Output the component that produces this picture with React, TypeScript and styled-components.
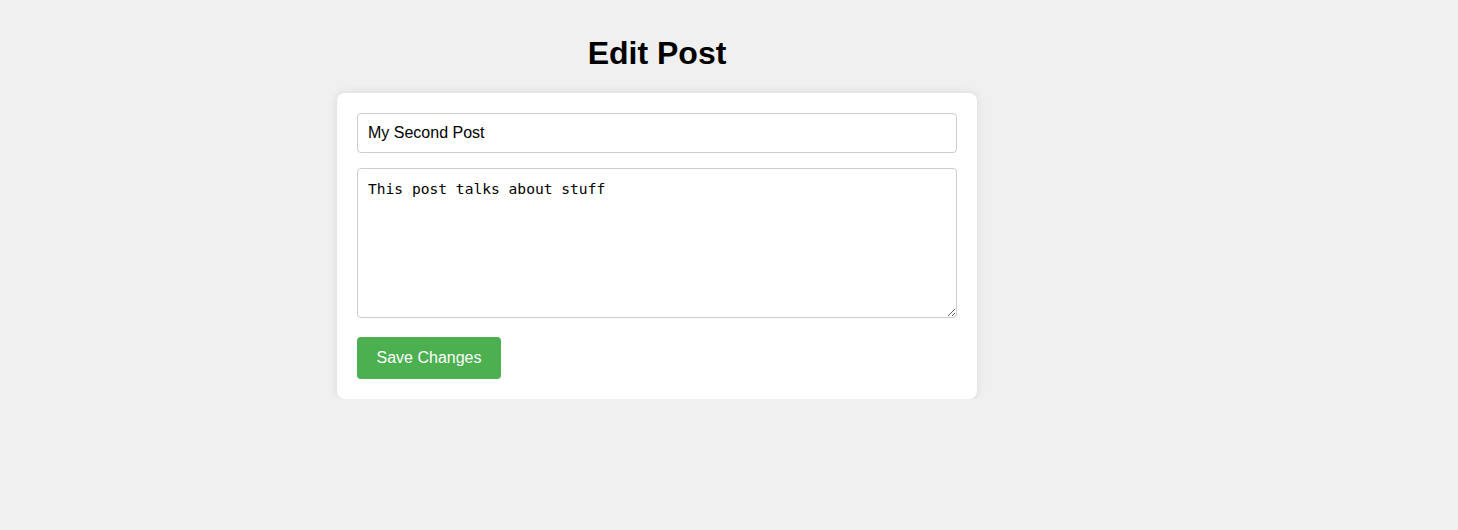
import React, { useState } from "react";
import styled, { createGlobalStyle } from "styled-components";

const GlobalStyle = createGlobalStyle`
  html, body {
    margin: 0;
    padding: 0;
    background: #f0f0f0;
    font-family: "Liberation Sans", Arial, sans-serif;
  }
`;

const Page = styled.div`
  width: 1314px;
  padding-top: 14px;
  display: flex;
  flex-direction: column;
  align-items: center;
`;

const Title = styled.h1`
  margin: 21.44px 0 20.44px;
  font-size: 32px;
  font-weight: bold;
  color: #000;
  text-align: center;
`;

const Card = styled.form`
  width: 600px;
  padding: 20px;
  background: #fff;
  border-radius: 8px;
  box-shadow: 0 0 10px rgba(0, 0, 0, 0.1);
  display: flex;
  flex-direction: column;
  align-items: flex-start;
`;

const TextInput = styled.input`
  box-sizing: border-box;
  width: 100%;
  height: 40px;
  padding: 10px;
  border: 1px solid #ccc;
  border-radius: 4px;
  font-family: "Liberation Sans", Arial, sans-serif;
  font-size: 16px;
  color: #000;
  margin: 0 0 15px;
  outline: none;
`;

const TextArea = styled.textarea`
  box-sizing: border-box;
  width: 100%;
  height: 150px;
  padding: 10px;
  border: 1px solid #ccc;
  border-radius: 4px;
  font-family: "DejaVu Sans Mono", monospace;
  font-size: 14.6px;
  line-height: 19px;
  color: #000;
  margin: 0 0 19px;
  outline: none;
  display: block;
`;

const SaveButton = styled.button`
  width: 144px;
  height: 42px;
  padding: 0;
  border: none;
  border-radius: 4px;
  background: #4caf50;
  color: #fff;
  font-family: "Liberation Sans", Arial, sans-serif;
  font-size: 16px;
  cursor: pointer;
`;

export default function App() {
  const [title, setTitle] = useState("My Second Post");
  const [body, setBody] = useState("This post talks about stuff");
  return (
    <>
      <GlobalStyle />
      <Page>
        <Title>Edit Post</Title>
        <Card onSubmit={(e) => e.preventDefault()}>
          <TextInput value={title} onChange={(e) => setTitle(e.target.value)} />
          <TextArea value={body} onChange={(e) => setBody(e.target.value)} />
          <SaveButton type="submit">Save Changes</SaveButton>
        </Card>
      </Page>
    </>
  );
}
